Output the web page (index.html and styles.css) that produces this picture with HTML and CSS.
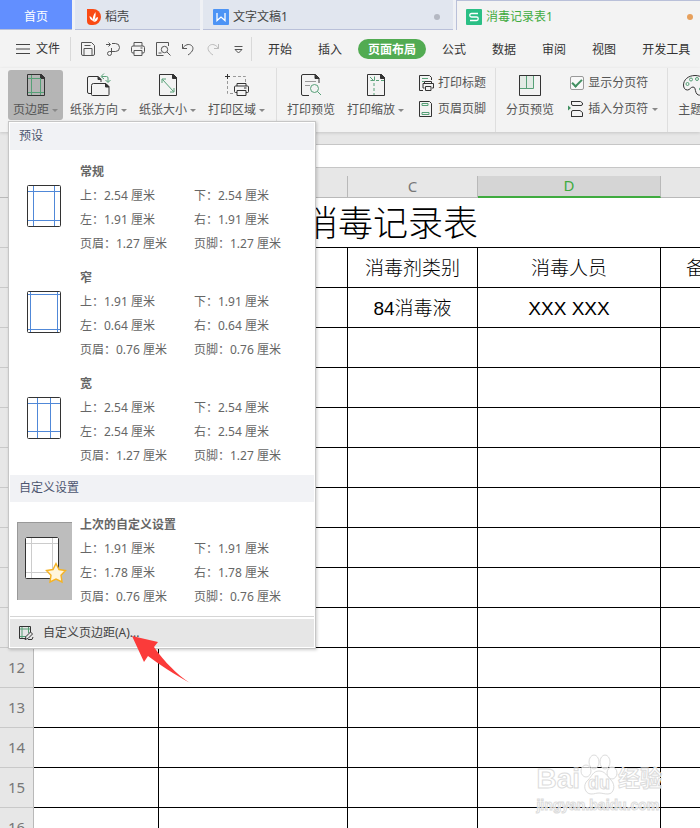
FILE: index.html
```html
<!DOCTYPE html>
<html lang="zh-CN">
<head>
    <meta charset="UTF-8">
    <meta name="viewport" content="width=device-width, initial-scale=1.0">
    <title>消毒记录表1</title>
    <link rel="stylesheet" href="styles.css">
</head>
<body>
    <header class="tabs">
        <button class="tab home">首页</button>
        <button class="tab docer">
            <svg width="14" height="16" viewBox="0 0 14 16"><path d="M0 0h6a8 8 0 0 1 0 16H4a4 4 0 0 1-4-4z" fill="#fa4a14"/><path d="M6.5 13C5 10 6 6 8.5 3c.5 4-.5 7-2 10zM6 12C3.5 11 2.500 9 2.500 7 5 8 6 10 6 12zM7 13c.5-3 2-4.500 4-5 0 3-1.500 4.500-4 5z" fill="#fff"/></svg>
            稻壳
        </button>
        <button class="tab writer">
            <svg width="16" height="16" viewBox="0 0 16 16"><rect width="16" height="16" rx="1" fill="#4d94f5"/><path d="M4 4v7.500l4-3.500 4 3.500V4" fill="none" stroke="#fff" stroke-width="1.3"/></svg>
            文字文稿1
            <span class="dot"></span>
        </button>
        <button class="tab active">
            <svg width="16" height="16" viewBox="0 0 16 16"><rect width="16" height="16" rx="1" fill="#2abf85"/><path d="M12 4.500H5.500a1.500 1.500 0 0 0 0 3.500h5a1.500 1.500 0 0 1 0 3.500H4" fill="none" stroke="#fff" stroke-width="1.3"/></svg>
            消毒记录表1
            <span class="dot"></span>
        </button>
    </header>

    <div class="menubar">
        <button class="file">
            <svg width="14" height="10" viewBox="0 0 14 10" stroke="#444"><path d="M0 .5h14M0 5h14M0 9.500h14"/></svg>
            文件
        </button>
        <div class="quick">
            <button aria-label="保存"><svg class="icon" width="16" height="16" viewBox="0 0 16 16"><path d="M1.500 1.500h10l3 3v8.500a1.500 1.500 0 0 1-1.500 1.500H3A1.500 1.500 0 0 1 1.500 13zM4 14V7.500h8V14M4.500 4.500h6"/></svg></button>
            <button aria-label="输出"><svg class="icon" width="16" height="16" viewBox="0 0 16 16"><path d="M1 3.500h4M3.500 1.500l2 2-2 2M7 2.500h3.500a4 4 0 0 1 0 8H4.500a2 2 0 1 0 2 2V7"/></svg></button>
            <button aria-label="打印"><svg class="icon" width="16" height="16" viewBox="0 0 16 16"><path d="M4 5V1.500h8V5M4 12H3a1.500 1.500 0 0 1-1.500-1.500v-4A1.500 1.500 0 0 1 3 5h10a1.500 1.500 0 0 1 1.500 1.500v4A1.500 1.500 0 0 1 13 12h-1M4 9.500h8v5H4zM10.500 7h2"/></svg></button>
            <button aria-label="打印预览"><svg class="icon" width="16" height="16" viewBox="0 0 16 16"><path d="M13.500 5V1.500h-12v13h7M3.500 12h3"/><circle cx="9.500" cy="8.500" r="3.200"/><path d="M12 11l3.500 3.500"/></svg></button>
            <button aria-label="撤销"><svg class="icon" width="16" height="16" viewBox="0 0 16 16"><path d="M2.500 3v4.500H7M2.500 7.500C5 3.500 9 2.500 11.500 4.500s2 6-3.500 9.500"/></svg></button>
            <button aria-label="恢复"><svg class="icon faded" width="16" height="16" viewBox="0 0 16 16"><path d="M13.500 3v4.500H9M13.500 7.500C11 3.500 7 2.500 4.500 4.500s-2 6 3.500 9.500"/></svg></button>
            <button aria-label="更多"><svg class="icon" width="16" height="16" viewBox="0 0 16 16"><path d="M4.500 5.500h8M5 8.500h7L8.500 12z"/></svg></button>
        </div>
        <nav class="menus">
            <button>开始</button>
            <button>插入</button>
            <button class="current">页面布局</button>
            <button>公式</button>
            <button>数据</button>
            <button>审阅</button>
            <button>视图</button>
            <button>开发工具</button>
        </nav>
    </div>

    <div class="ribbon">
        <div class="group">
            <button class="tool pressed">
                <svg class="icon big" width="24" height="24" viewBox="0 0 24 24"><path d="M3.500 1.500h14l3 3v18h-17z"/><path class="ink" d="M16.500 1.500h1l3 3v1h-4z"/><path class="green" d="M7.500 2v20M16.500 5v17M4 5.500h12M4 19.500h16"/></svg>
                <span class="label">页边距<i class="caret"></i></span>
            </button>
            <button class="tool">
                <svg class="icon big" width="24" height="24" viewBox="0 0 24 24"><path d="M4 20.500H2a1.500 1.500 0 0 1-1.500-1.500V5A1.500 1.500 0 0 1 2 3.500h9l3 3V9"/><path class="ink" d="M11 3.500l3 3h-3z"/><path d="M6.500 10.500h12.500l3 3v8a1 1 0 0 1-1 1H5.500a1 1 0 0 1-1-1v-9a2 2 0 0 1 2-2z"/><path class="ink" d="M18.500 10.500l3.500 3.500h-3.500z"/><path class="green" d="M15 3.500h4.500a1.500 1.500 0 0 1 1.500 1.500v4M17 .5l-3 3 3 2.500M18.500 7l2.500 2.500L23.500 7"/></svg>
                <span class="label">纸张方向<i class="caret"></i></span>
            </button>
            <button class="tool">
                <svg class="icon big" width="24" height="24" viewBox="0 0 24 24"><path d="M3.500 1.500h14l3 3v18h-17z"/><path class="ink" d="M16.500 1.500h1l3 3v1h-4z"/><path class="green" d="M6.500 6.500l11 12M6 10V6h4M18 15v4h-4"/></svg>
                <span class="label">纸张大小<i class="caret"></i></span>
            </button>
            <button class="tool">
                <svg class="icon big" width="24" height="24" viewBox="0 0 24 24"><path class="dash" d="M8 3.500h12.500V9M2.500 8v12.500H8"/><path d="M0 3.500h5M2.500 1v5M12 13v-2.500h9V13M12 19.500h-1.500a1 1 0 0 1-1-1V14a1 1 0 0 1 1-1h12a1 1 0 0 1 1 1v4.500a1 1 0 0 1-1 1H21M12 17.500h9v5h-9zM19 15h2.500"/></svg>
                <span class="label">打印区域<i class="caret"></i></span>
            </button>
        </div>
        <div class="group">
            <button class="tool">
                <svg class="icon big" width="24" height="24" viewBox="0 0 24 24"><path d="M10 22.500H4A1.500 1.500 0 0 1 2.500 21V3A1.500 1.500 0 0 1 4 1.500h12.500l3.500 3.500v5"/><path class="ink" d="M16 1.500l4 4h-4z"/><path class="dash solid" d="M6 8.500h11M6 12.500h5"/><circle class="green" cx="15.500" cy="15.500" r="4"/><path class="green" d="M18.500 18.500l3.500 3.500"/></svg>
                <span class="label">打印预览</span>
            </button>
            <button class="tool">
                <svg class="icon big" width="24" height="24" viewBox="0 0 24 24"><path d="M3.500 1.500h14l3 3v18h-17z"/><path class="ink" d="M16.500 1.500h1l3 3v1h-4z"/><path class="green" d="M6 4l3.500 3.500M6.500 7.500h4v-4"/><path class="green dashed" d="M12 7.500h8M10 10v12"/></svg>
                <span class="label">打印缩放<i class="caret"></i></span>
            </button>
            <div class="stack">
                <button class="row">
                    <svg class="icon big" width="16" height="16" viewBox="0 0 16 16"><path d="M5 15.500H1.500V.5h10l2 2V5"/><path class="green" d="M4 3.500h6M4 6.500h2"/><path d="M6.500 8.500V6.500h7v2M6.500 13H5V8.500h10.500V13h-1.500M7.500 11.500h5.500v4H7.500z"/></svg>
                    打印标题
                </button>
                <button class="row">
                    <svg class="icon big" width="16" height="16" viewBox="0 0 16 16"><path d="M1.500.5h10l2 2v13h-12z"/><path class="green" d="M4 2.500h6v2H4zM4 11.500h7v2H4z"/></svg>
                    页眉页脚
                </button>
            </div>
        </div>
        <div class="group">
            <button class="tool">
                <svg class="icon big" width="24" height="24" viewBox="0 0 24 24"><path class="green tint" d="M1.500 2.500h14v13h-14zM8.500 3v12"/><path d="M1.500 2.500h21v20h-21z"/></svg>
                <span class="label">分页预览</span>
            </button>
            <div class="stack">
                <label class="row"><input type="checkbox" class="check" checked>显示分页符</label>
                <button class="row">
                    <svg class="icon big" width="16" height="16" viewBox="0 0 16 16"><path d="M3.500 0v3a1.500 1.500 0 0 0 1.500 1.500h8a1.500 1.500 0 0 0 1.500-1.500V2L12.500.5h-9M3.500 16V11a1.500 1.500 0 0 1 1.500-1.500h7l2.500 2V15.500h-11"/><path d="M0 4.500l3 2.500-3 2.500z" fill="#419061" stroke="none"/></svg>
                    插入分页符<i class="caret"></i>
                </button>
            </div>
        </div>
        <div class="group">
            <button class="tool">
                <svg class="icon big" width="24" height="24" viewBox="0 0 24 24"><path d="M12 2.500C5 2.500.5 7 .5 12c0 3 1.500 5 4 5s3-3 5.500-3 2 3 3 5.500 3 3 5 2.500c3-1 5.500-4.500 5.500-9.500C23.500 6 18 2.500 12 2.500z"/><circle class="green" cx="4.500" cy="11" r="1.500"/><circle class="green" cx="8" cy="6.500" r="1.500"/><circle class="green" cx="14" cy="6" r="1.500"/><circle class="green" cx="19" cy="10" r="1.500"/><circle class="green" cx="18" cy="16" r="1.500"/></svg>
                <span class="label">主题<i class="caret"></i></span>
            </button>
        </div>
    </div>

    <div class="formula">
        <input type="text" aria-label="编辑栏">
    </div>

    <main class="sheet">
        <table>
            <colgroup>
                <col class="num"><col class="a"><col class="b"><col class="c"><col class="d"><col class="e">
            </colgroup>
            <thead>
                <tr><th></th><th></th><th></th><th>C</th><th class="selected">D</th><th></th></tr>
            </thead>
            <tbody>
                <tr class="title"><th>1</th><td colspan="3">消毒记录表</td><td></td><td></td></tr>
                <tr><th>2</th><td></td><td></td><td>消毒剂类别</td><td>消毒人员</td><td>备注</td></tr>
                <tr><th>3</th><td></td><td></td><td>84消毒液</td><td>XXX XXX</td><td></td></tr>
                <tr><th>4</th><td></td><td></td><td></td><td></td><td></td></tr>
                <tr><th>5</th><td></td><td></td><td></td><td></td><td></td></tr>
                <tr><th>6</th><td></td><td></td><td></td><td></td><td></td></tr>
                <tr><th>7</th><td></td><td></td><td></td><td></td><td></td></tr>
                <tr><th>8</th><td></td><td></td><td></td><td></td><td></td></tr>
                <tr><th>9</th><td></td><td></td><td></td><td></td><td></td></tr>
                <tr><th>10</th><td></td><td></td><td></td><td></td><td></td></tr>
                <tr><th>11</th><td></td><td></td><td></td><td></td><td></td></tr>
                <tr><th>12</th><td></td><td></td><td></td><td></td><td></td></tr>
                <tr><th>13</th><td></td><td></td><td></td><td></td><td></td></tr>
                <tr><th>14</th><td></td><td></td><td></td><td></td><td></td></tr>
                <tr><th>15</th><td></td><td></td><td></td><td></td><td></td></tr>
                <tr><th>16</th><td></td><td></td><td></td><td></td><td></td></tr>
            </tbody>
        </table>
    </main>

    <!-- margins menu -->
    <div class="popup">
        <h3>预设</h3>
        <div class="presets">
            <button class="preset">
                <svg class="thumb" width="55" height="78" viewBox="0 0 55 78"><path class="blue" d="M16.500 16v42M37.500 16v42M10 22.500h34M10 51.500h34"/><rect class="page" x="10.500" y="16.500" width="33" height="41" rx="1"/></svg>
                <span class="values"><b>常规</b><span>上：2.54 厘米</span><span>下：2.54 厘米</span><span>左：1.91 厘米</span><span>右：1.91 厘米</span><span>页眉：1.27 厘米</span><span>页脚：1.27 厘米</span></span>
            </button>
            <button class="preset">
                <svg class="thumb" width="55" height="78" viewBox="0 0 55 78"><path class="blue" d="M13.500 16v42M40.500 16v42M10 19.500h34M10 54.500h34"/><rect class="page" x="10.500" y="16.500" width="33" height="41" rx="1"/></svg>
                <span class="values"><b>窄</b><span>上：1.91 厘米</span><span>下：1.91 厘米</span><span>左：0.64 厘米</span><span>右：0.64 厘米</span><span>页眉：0.76 厘米</span><span>页脚：0.76 厘米</span></span>
            </button>
            <button class="preset">
                <svg class="thumb" width="55" height="78" viewBox="0 0 55 78"><path class="blue" d="M20.500 16v42M33.500 16v42M10 22.500h34M10 50.500h34"/><rect class="page" x="10.500" y="16.500" width="33" height="41" rx="1"/></svg>
                <span class="values"><b>宽</b><span>上：2.54 厘米</span><span>下：2.54 厘米</span><span>左：2.54 厘米</span><span>右：2.54 厘米</span><span>页眉：1.27 厘米</span><span>页脚：1.27 厘米</span></span>
            </button>
        </div>
        <h3>自定义设置</h3>
        <div class="presets last">
            <button class="preset">
                <svg class="thumb chosen" width="55" height="78" viewBox="0 0 55 78"><path d="M0 78V0h55" stroke="#999" stroke-width="2"/><rect x="8" y="15" width="34" height="41" fill="#fff"/><path class="grey" d="M14.500 15v41M35.500 15v41M8 21.500h34M8 50.500h34"/><rect class="page" x="8.500" y="15.500" width="33" height="41" rx="1"/><path d="M39 41.500l3 6 6.500 1-4.500 4.700 1 6.800-6-3-6 3 1-6.800-4.500-4.700 6.500-1z" fill="#fff5dc" stroke="#f5b324" stroke-width="1.4"/></svg>
                <span class="values"><b>上次的自定义设置</b><span>上：1.91 厘米</span><span>下：1.91 厘米</span><span>左：1.78 厘米</span><span>右：1.78 厘米</span><span>页眉：0.76 厘米</span><span>页脚：0.76 厘米</span></span>
            </button>
        </div>
        <div class="footer">
            <button class="custom">
                <svg class="icon big" width="16" height="16" viewBox="0 0 16 16"><path d="M8 13.500H1.500v-12h11V7"/><path class="green" d="M4 2v11M10.500 2v6M2 4h10M2 11.500h6"/><path d="M7 14.500l1-3L12.500 7l2 2-4.500 4.500zM10 14.500h4l1-2.500"/></svg>
                自定义页边距(A)...
            </button>
        </div>
        <svg class="pointer" width="62" height="50" viewBox="0 0 62 50"><path d="M1 1l26 6-4 5c6 9 22 28 38 37C44 40 26 28 17 21l-4 6z" fill="#fb3b3a"/></svg>
    </div>

    <div class="watermark">
        <div class="brand">
            <span>Bai</span>
            <span class="paw">
                <svg width="38" height="42" viewBox="0 0 38 42"><ellipse cx="6" cy="17" rx="5" ry="6"/><ellipse cx="14" cy="8" rx="5" ry="7"/><ellipse cx="25" cy="8" rx="5" ry="7"/><ellipse cx="32" cy="19" rx="5" ry="6"/><path d="M19 17c-6 0-7 5-11 9-6 5-3 14 3 14 4 0 5-1 8-1s5 1 9 1c6 0 8-9 3-14-4-4-6-9-12-9z"/></svg>
                <small>du</small>
            </span>
            <span>经验</span>
        </div>
        <div class="site">jingyan.baidu.com</div>
    </div>
</body>
</html>
```

FILE: styles.css
```css
* {
    box-sizing: border-box;
}
body {
    margin: 0;
    height: 100vh;
    overflow: hidden;
    position: relative;
    display: flex;
    flex-direction: column;
    background: #e7e7e7;
    color: #444;
    font-family: "Noto Sans", "Noto Sans CJK SC", sans-serif;
    font-size: 12px;
    line-height: 18px;
}
button {
    border: none;
    background: none;
    padding: 0;
    color: inherit;
    font: inherit;
    text-align: left;
    white-space: nowrap;
}
svg {
    display: block;
    flex: none;
}

/* document tabs */
.tabs {
    display: grid;
    grid-template-columns: 72px 125fr 250fr 244fr;
    gap: 3px;
    height: 30px;
    flex: none;
    background: #eff1f5;
}
.tab {
    display: flex;
    align-items: center;
    gap: 4px;
    padding: 4px 10px 0;
    background: #e1e6ef;
    border-bottom: 1px solid #b9c0d9;
}
.home {
    justify-content: center;
    background: #628fff;
    color: #fff;
}
.docer {
    padding-left: 12px;
}
.tab.active {
    background: #f3f3f3;
    color: #3fab3f;
    border: 1px solid #b9c0d9;
    border-width: 1px 0 0 1px;
    padding: 3px 7px 0 9px;
}
.dot {
    width: 6px;
    height: 6px;
    border-radius: 50%;
    margin-left: auto;
    background: #b4b8c2;
}
.writer .dot {
    margin-right: 3px;
}
.active .dot {
    background: #e7a05c;
}

/* menu bar */
.menubar {
    display: flex;
    align-items: center;
    height: 38px;
    flex: none;
    background: #f3f3f3;
    color: #333;
}
.file {
    display: flex;
    align-items: center;
    gap: 6px;
    padding: 0 10px 0 16px;
}
.quick {
    display: flex;
    gap: 9px;
    padding: 4px 5px 4px 9px;
    border: 1px solid #d9d9d9;
    border-width: 0 1px;
}
.menus {
    display: flex;
    gap: 6px;
    padding-left: 6px;
}
.menus button {
    padding: 2px 10px 0;
    border-radius: 10px;
}
.menus .current {
    background: #52ab52;
    color: #fff;
    font-weight: bold;
}
.icon {
    fill: none;
    stroke: #555;
}
.big {
    stroke: #333;
}
.faded {
    stroke: #bbb;
}
.icon .green {
    stroke: #56a077;
}
.icon .ink {
    fill: #333;
}
.icon .dash {
    stroke: #999;
    stroke-dasharray: 3 2;
}
.icon .solid {
    stroke-dasharray: none;
}
.icon .dashed {
    stroke-dasharray: 3 2;
}
.icon .tint {
    fill: #e2ebe5;
}

/* ribbon */
.ribbon {
    display: flex;
    height: 64px;
    flex: none;
    padding-left: 3px;
    background: #f3f3f3;
    color: #555;
    box-shadow: 0 1px 3px rgba(0, 0, 0, 0.15);
}
.group {
    display: flex;
    align-items: flex-start;
    gap: 2px;
    flex: none;
    padding: 2px 6px 0 5px;
    border-right: 1px solid #dedede;
}
.tool {
    display: flex;
    flex-direction: column;
    align-items: center;
    gap: 4px;
    height: 50px;
    padding: 3px 5px 1px;
    border-radius: 3px;
}
.pressed {
    background: #b5b5b5;
}
.label {
    display: flex;
    align-items: center;
}
.caret {
    margin-left: 3px;
    border: 3px solid transparent;
    border-top-color: #888;
    border-bottom: none;
}
.stack {
    padding: 0 3px 0 7px;
}
.row {
    display: flex;
    align-items: center;
    gap: 4px;
    height: 26px;
}
.row .caret {
    margin-left: 0;
}
.check {
    appearance: none;
    width: 14px;
    height: 14px;
    margin: 0 0 0 2px;
    border: 1px solid #999;
    border-radius: 2px;
    background: #f8f8f8;
    display: grid;
    place-items: center;
}
.check:checked::before {
    content: "";
    width: 8px;
    height: 4px;
    border: solid #419061;
    border-width: 0 0 2px 2px;
    transform: translateY(-1px) rotate(-45deg);
}

/* formula bar */
.formula {
    display: flex;
    flex: none;
    padding: 12px 0 0 100px;
}
.formula input {
    flex: 1;
    height: 24px;
    border: 1px solid #c6c6c6;
    border-width: 1px 0;
    background: #fff;
    outline: none;
}

/* spreadsheet */
.sheet {
    flex: 1;
    min-height: 0;
    overflow: hidden;
    padding-top: 8px;
}
table {
    width: 750px;
    table-layout: fixed;
    border-collapse: separate;
    border-spacing: 0;
}
.num { width: 34px; }
.a { width: 125px; }
.b { width: 189px; }
.c { width: 130px; }
.d { width: 183px; }
.e { width: 89px; }
th {
    padding: 0 0 2px;
    color: #777;
    font-size: 15px;
    font-weight: normal;
    border-right: 1px solid #b9b9b9;
    border-bottom: 1px solid #c9c9c9;
}
thead th {
    height: 22px;
    border-bottom-color: #b9b9b9;
}
thead .selected {
    background: #d5d5d5;
    color: #3fab3f;
    border-bottom: 2px solid #3fab3f;
}
td {
    height: 40px;
    padding: 2px 0 0;
    background: #fff;
    color: #000;
    border-right: 1px solid #000;
    border-bottom: 1px solid #000;
    font-family: "Liberation Sans", "Noto Sans CJK SC", sans-serif;
    font-size: 19px;
    font-weight: 300;
    text-align: center;
    white-space: nowrap;
}
.title td {
    height: 50px;
    padding-top: 3px;
    font-size: 35px;
    line-height: 44px;
    text-align: right;
    border-right: none;
}

/* margins menu */
.popup {
    position: absolute;
    left: 8px;
    top: 121px;
    width: 308px;
    padding: 1px;
    border: 1px solid #c6c6c6;
    background: #fff;
    color: #666;
    box-shadow: 1px 1px 3px rgba(0, 0, 0, 0.2);
}
.popup h3 {
    margin: 0;
    padding: 4px 9px 5px;
    background: #f1f2f5;
    color: #4d5670;
    font-size: 12px;
    font-weight: normal;
}
.presets {
    display: grid;
    gap: 10px;
    padding: 10px 7px 7px;
}
.presets.last {
    padding-top: 11px;
}
.preset {
    display: flex;
    align-items: center;
    gap: 8px;
}
.values {
    display: grid;
    grid-template-columns: 114px 1fr;
    flex: 1;
    line-height: 24px;
}
.values b {
    grid-column: 1 / -1;
}
.thumb {
    fill: none;
}
.page {
    stroke: #333;
}
.blue {
    stroke: #5088d8;
}
.grey {
    stroke: #ccc;
}
.chosen {
    background: #bdbdbd;
}
.footer {
    padding-top: 2px;
    border-top: 1px solid #d5d5d5;
}
.custom {
    display: flex;
    align-items: center;
    gap: 9px;
    width: 100%;
    height: 28px;
    padding: 0 8px;
    background: #e6e6e6;
    color: #444;
}
.pointer {
    position: absolute;
    left: 122px;
    top: 513px;
}

/* watermark */
.watermark {
    position: absolute;
    right: 38px;
    bottom: 14px;
    color: rgba(255, 255, 255, 0.7);
    font-family: "Liberation Sans", "Noto Sans CJK SC", sans-serif;
    font-weight: bold;
    -webkit-text-stroke: 1px #dcdcdc;
    pointer-events: none;
}
.brand {
    display: flex;
    align-items: flex-end;
    font-size: 28px;
    line-height: 34px;
}
.brand span:last-child {
    font-size: 22px;
}
.paw {
    display: grid;
    place-items: end center;
}
.paw svg,
.paw small {
    grid-area: 1 / 1;
}
.paw svg {
    fill: rgba(255, 255, 255, 0.7);
    stroke: #dcdcdc;
}
.paw small {
    font-size: 18px;
    line-height: 26px;
}
.site {
    font-size: 14px;
    line-height: 18px;
}
```
